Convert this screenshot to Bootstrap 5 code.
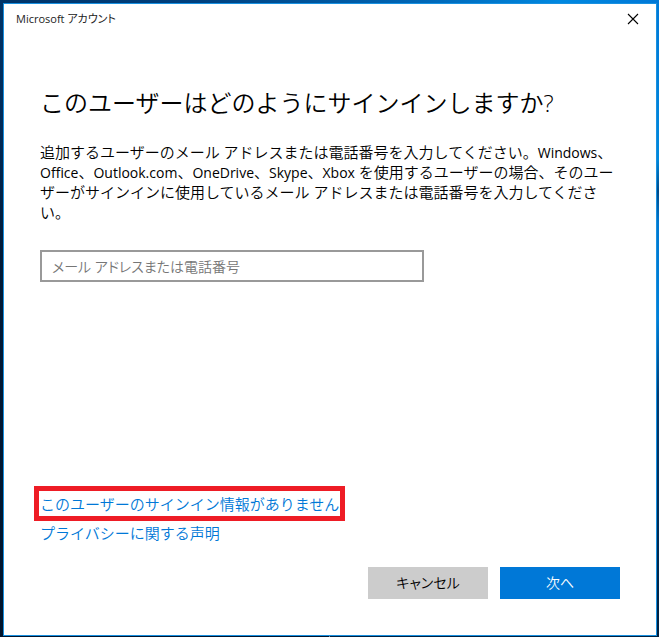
<!DOCTYPE html>
<html lang="ja">
<head>
<meta charset="utf-8">
<meta name="viewport" content="width=device-width, initial-scale=1">
<title>Microsoft アカウント</title>
<link href="https://cdn.jsdelivr.net/npm/bootstrap@5.3.0/dist/css/bootstrap.min.css" rel="stylesheet">
<style>
  body {
    font-family: "Open Sans", "Noto Sans CJK JP", sans-serif;
    font-size: 15px;
    font-weight: 350;
    line-height: 20px;
    color: #000;
    padding: 3px 2px 1px 3px;
    background:
      linear-gradient(#0078d7, #0088dc 25%, #004a88 30%, #0078d0 35%, #0080d8 50%, #003a70 62%, #00203f) right / 50% 100% no-repeat,
      linear-gradient(#003468, #002a58 20%, #001a38 40%, #00142c) left / 50% 100% no-repeat;
  }
  body::before {
    content: "";
    position: absolute;
    inset: 0 0 auto 0;
    height: 3px;
    background: linear-gradient(90deg, #003468, #00407e 30%, #0068b8 65%, #0088e0 85%, #0078d7);
  }
  .window { border: 1px solid #1890e0; }
  .caption { font-size: 11px; font-weight: 400; padding: 0 11px 0 12px; height: 30px; color: #222; }
  .kana-tight { font-feature-settings: "palt"; }
  .close-btn { width: 24px; height: 24px; }
  .content { padding: 53px 36px 36px; }
  .heading { font-size: 24px; line-height: 32px; font-weight: 350; margin-bottom: 23px; }
  .intro { margin-bottom: 28px; line-break: strict; }
  .latin { font-size: 14px; font-weight: 400; line-height: 14px; }
  .account { max-width: 384px; height: 32px; padding: 0 10px; border: 2px solid #999; font-size: 14px; font-weight: 350; line-height: 20px; }
  .account::placeholder { color: #767676; }
  .links { gap: 2px; }
  .links a { color: #0078d7; }
  .marked { border: 5px solid #ee1c25; margin-left: -6px; padding: 3px 1px 2px 1px; }
  .privacy { margin-bottom: 24px; }
  .action { width: 120px; height: 32px; padding: 0; font-size: 14px; font-weight: 350; line-height: 20px; }
  .cancel { --bs-btn-bg: #ccc; --bs-btn-color: #000; --bs-btn-hover-bg: #bbb; }
  .next { --bs-btn-bg: #0078d7; --bs-btn-color: #fff; --bs-btn-hover-bg: #006cc1; --bs-btn-hover-color: #fff; }
</style>
<script src="https://cdn.jsdelivr.net/npm/bootstrap@5.3.0/dist/js/bootstrap.bundle.min.js" defer></script>
</head>
<body class="min-vh-100 d-flex flex-column position-relative">
<div class="window bg-white flex-grow-1 d-flex flex-column position-relative">
  <header class="caption d-flex align-items-center justify-content-between">
    <span class="kana-tight">Microsoft アカウント</span>
    <button type="button" class="close-btn btn border-0 p-0 d-flex align-items-center justify-content-center rounded-0" aria-label="閉じる">
      <svg width="12" height="12" viewBox="0 0 12 12" fill="none" stroke="#000" stroke-width="1.1" aria-hidden="true"><path d="M1 1l10 10M11 1L1 11"/></svg>
    </button>
  </header>
  <main class="content flex-grow-1 d-flex flex-column">
    <h1 class="heading">このユーザーはどのようにサインインしますか?</h1>
    <p class="intro">追加するユーザーのメール アドレスまたは電話番号を入力してください。<span class="latin">Windows</span>、<span class="latin">Office</span>、<span class="latin">Outlook.com</span>、<span class="latin">OneDrive</span>、<span class="latin">Skype</span>、<span class="latin">Xbox</span> を使用するユーザーの場合、そのユーザーがサインインに使用しているメール アドレスまたは電話番号を入力してください。</p>
    <input type="text" class="account kana-tight form-control rounded-0" placeholder="メール アドレスまたは電話番号" aria-label="メール アドレスまたは電話番号">
    <div class="links mt-auto d-flex flex-column align-items-start">
      <a href="#" class="marked text-decoration-none">このユーザーのサインイン情報がありません</a>
      <a href="#" class="privacy text-decoration-none">プライバシーに関する声明</a>
    </div>
    <div class="d-flex justify-content-end">
      <button type="button" class="action cancel kana-tight btn border-0 rounded-0 me-2">キャンセル</button>
      <button type="button" class="action next kana-tight btn border-0 rounded-0 ms-1">次へ</button>
    </div>
  </main>
</div>
</body>
</html>
